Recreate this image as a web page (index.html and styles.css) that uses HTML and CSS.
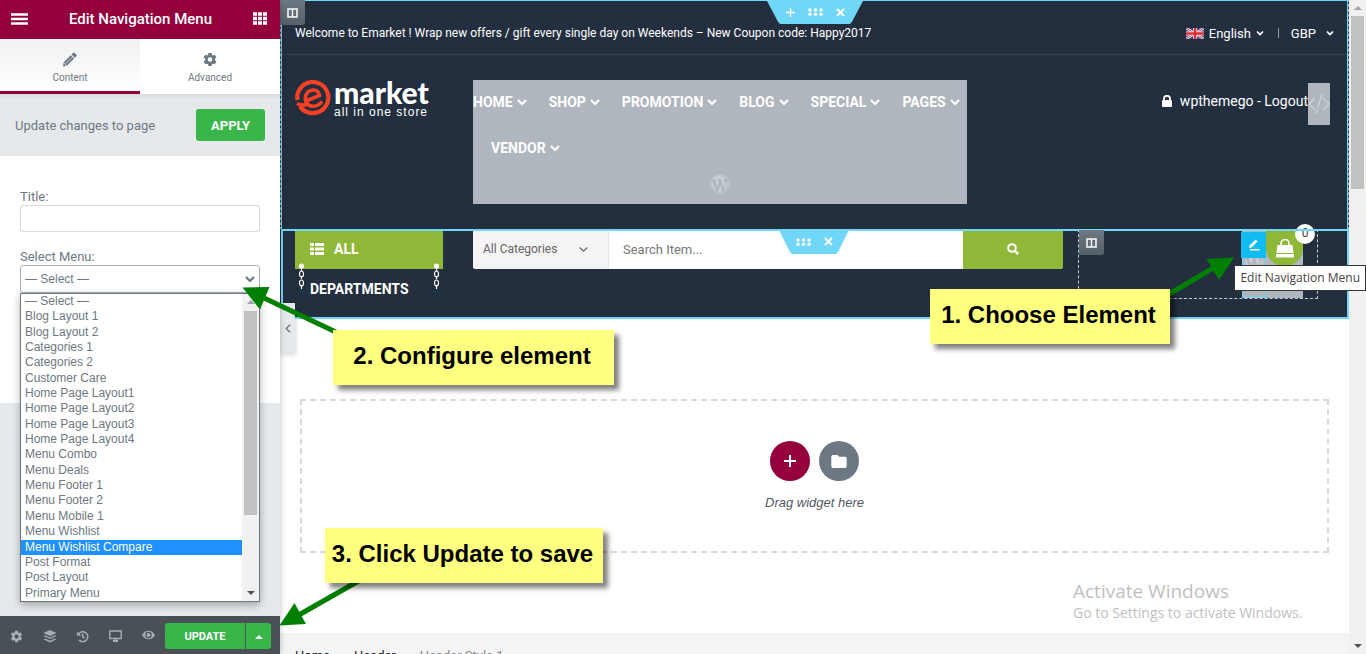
FILE: index.html
```html
<!DOCTYPE html>
<html lang="en">
<head>
  <meta charset="UTF-8" />
  <title>Edit Navigation Menu</title>
  <link rel="stylesheet" href="styles.css">
</head>
<body>
  <!-- shared icons -->
  <svg class="sprite" aria-hidden="true">
    <symbol id="chevron" viewBox="0 0 10 8"><path d="M1 2 L5 6 L9 2" fill="none" stroke="currentColor" stroke-width="2.2"/></symbol>
    <symbol id="gear" viewBox="0 0 16 16"><path fill="currentColor" fill-rule="evenodd" d="M6.3 1h3.4l.4 2 1 .6 2-.7 1.7 3-1.6 1.400v1.400l1.600 1.400-1.700 3-2-.7-1 .6-.4 2H6.300l-.4-2-1-.6-2 .7-1.700-3 1.600-1.400V7.300L1.200 5.900l1.700-3 2 .7 1-.6zM8 5.500a2.500 2.500 0 1 0 0 5 2.500 2.500 0 0 0 0-5z"/></symbol>
    <symbol id="dots" viewBox="0 0 15 8"><g fill="currentColor"><circle cx="2" cy="2" r="1.700"/><circle cx="7.500" cy="2" r="1.700"/><circle cx="13" cy="2" r="1.700"/><circle cx="2" cy="6.300" r="1.700"/><circle cx="7.500" cy="6.300" r="1.700"/><circle cx="13" cy="6.300" r="1.700"/></g></symbol>
    <symbol id="cross" viewBox="0 0 9 9"><path d="M1 1 L8 8 M8 1 L1 8" stroke="currentColor" stroke-width="2"/></symbol>
    <symbol id="columns" viewBox="0 0 11 10"><path d="M1 1h9v8H1z M5.500 1v8" fill="none" stroke="currentColor" stroke-width="1.500"/></symbol>
    <symbol id="wp" viewBox="0 0 20 20"><circle cx="10" cy="10" r="9.300" fill="none" stroke="currentColor"/><path fill="currentColor" d="M2.200 7 6.400 17.200A8 8 0 0 1 2.200 7zM3 5.500A8 8 0 0 1 15.500 4.200c-1.400.2-1.700 1.800-.9 3 .9 1.500.8 2.600.2 4.300l-1 3-3-9h1V5H7v.5h1l1 2.700-1.600 5-2.700-7.700h1V5H3.300zM10.200 11l2.400 6.500a8 8 0 0 1-4.600.2zM17.200 6.800a8 8 0 0 1-3.400 10l2.500-7c.4-1.200.7-2 .9-3z"/></symbol>
    <symbol id="chain" viewBox="0 0 7 32"><g fill="none" stroke="#fff" stroke-width="1.200"><path d="M3.500 4v4M3.500 13v3M3.500 22v4"/><ellipse cx="3.500" cy="11" rx="2" ry="3"/><ellipse cx="3.500" cy="20" rx="2" ry="3"/></g><circle cx="3.500" cy="3" r="2.600" fill="#fff"/><circle cx="3.500" cy="29" r="2.600" fill="#17384e"/></symbol>
  </svg>

  <div class="editor">
    <aside class="panel">
      <header class="panel-header">
        <button class="icon-btn" aria-label="Menu"><svg width="17" height="12" viewBox="0 0 17 12"><path d="M0 1.500h17M0 6h17M0 10.500h17" stroke="currentColor" stroke-width="2.400"/></svg></button>
        <h1>Edit Navigation Menu</h1>
        <button class="icon-btn" aria-label="Widgets"><svg width="14" height="13" viewBox="0 0 14 13"><path d="M0 2h14M0 6.500h14M0 11h14" stroke="currentColor" stroke-width="3.600" stroke-dasharray="4 1"/></svg></button>
      </header>
      <nav class="tabs">
        <button class="tab active">
          <svg width="14" height="15" viewBox="0 0 14 15"><path fill="currentColor" d="M0 14.500l.8-4.300 6.900-7 3.400 3.400-7 7zM8.500 2.400 10 .9q.8-.7 1.600 0l1.700 1.700q.8.8 0 1.600l-1.500 1.600z"/><path d="M3 11.500l5.800-6M1 11l2.500 2.500" stroke="#fff" stroke-width=".7"/></svg>
          Content
        </button>
        <button class="tab">
          <svg width="16" height="15"><use href="#gear"/></svg>
          Advanced
        </button>
      </nav>
      <div class="notice">
        <span>Update changes to page</span>
        <button class="apply">APPLY</button>
      </div>
      <div class="controls">
        <div class="control">
          <label for="title">Title:</label>
          <input id="title" type="text">
        </div>
        <div class="control">
          <label for="menu">Select Menu:</label>
          <div class="select-wrap">
            <select id="menu"><option>— Select —</option></select>
            <svg class="select-arrow" width="10" height="8"><use href="#chevron"/></svg>
            <div class="dropdown">
              <ul role="listbox" aria-label="Select Menu">
                <li>— Select —</li>
                <li>Blog Layout 1</li>
                <li>Blog Layout 2</li>
                <li>Categories 1</li>
                <li>Categories 2</li>
                <li>Customer Care</li>
                <li>Home Page Layout1</li>
                <li>Home Page Layout2</li>
                <li>Home Page Layout3</li>
                <li>Home Page Layout4</li>
                <li>Menu Combo</li>
                <li>Menu Deals</li>
                <li>Menu Footer 1</li>
                <li>Menu Footer 2</li>
                <li>Menu Mobile 1</li>
                <li>Menu Wishlist</li>
                <li class="selected">Menu Wishlist Compare</li>
                <li>Post Format</li>
                <li>Post Layout</li>
                <li>Primary Menu</li>
              </ul>
              <div class="scrollbar">
                <i class="up"></i><span class="thumb"></span><i class="down"></i>
              </div>
            </div>
          </div>
        </div>
      </div>
      <footer class="panel-footer">
        <div class="tools">
          <button class="icon-btn" aria-label="Settings"><svg width="13" height="13"><use href="#gear"/></svg></button>
          <button class="icon-btn" aria-label="Navigator"><svg width="14" height="13" viewBox="0 0 14 13"><path fill="currentColor" d="M7 0l6.500 3L7 6 .5 3zM2 5.200l5 2.300 5-2.300 1.500.8L7 9 .5 6zM2 8.500l5 2.300 5-2.300 1.500.8L7 12.400.5 9.300z"/></svg></button>
          <button class="icon-btn" aria-label="History"><svg width="13" height="13" viewBox="0 0 13 13"><path d="M2.300 4.500A5 5 0 1 1 3 10M6.600 3.500v3.300l2 1.300" fill="none" stroke="currentColor" stroke-width="1.500"/><path fill="currentColor" d="M.8 1.500v4.300h4.200z"/></svg></button>
          <button class="icon-btn" aria-label="Responsive mode"><svg width="13" height="12" viewBox="0 0 13 12"><path d="M.8 1h11.400v7.500H.8z" fill="none" stroke="currentColor" stroke-width="1.400"/><path d="M4 11h5M6.500 9v2" stroke="currentColor" stroke-width="1.800"/></svg></button>
          <button class="icon-btn" aria-label="Preview"><svg width="13" height="10" viewBox="0 0 13 10"><path fill="currentColor" fill-rule="evenodd" d="M0 5Q2.500.7 6.500.7T13 5q-2.500 4.300-6.500 4.300T0 5zm6.500-3.200a3.200 3.200 0 1 0 0 6.400 3.200 3.200 0 0 0 0-6.400z"/><circle cx="6.500" cy="5" r="2" fill="currentColor"/></svg></button>
        </div>
        <button class="update">UPDATE</button>
        <button class="update-more" aria-label="Save options"><i class="up"></i></button>
      </footer>
    </aside>

    <main class="preview">
      <section class="section section-top">
        <div class="topbar">
          <p>Welcome to Emarket ! Wrap new offers / gift every single day on Weekends – New Coupon code: Happy2017</p>
          <div class="locale">
            <a href="#" class="language">
              <svg width="18" height="11" viewBox="0 0 18 11"><path fill="#2b3f8c" d="M0 0h18v11H0z"/><path d="M0 0l18 11M18 0L0 11" stroke="#eee" stroke-width="2.600"/><path d="M0 0l18 11M18 0L0 11" stroke="#d33" stroke-width="1"/><path d="M9 0v11M0 5.500h18" stroke="#eee" stroke-width="4"/><path d="M9 0v11M0 5.500h18" stroke="#e02b35" stroke-width="2.600"/></svg>
              English
              <svg width="8" height="6"><use href="#chevron"/></svg>
            </a>
            <span class="sep"></span>
            <a href="#" class="currency">GBP <svg width="8" height="6"><use href="#chevron"/></svg></a>
          </div>
        </div>
        <div class="header-row">
          <a href="#" class="logo">
            <svg width="36" height="36" viewBox="0 0 36 36"><g fill="none" stroke="#fb4023"><path d="M2.500 20A15.500 15.500 0 1 1 4.800 26" stroke-width="4.200"/><path d="M2 23.500Q7 26 12 24.500" stroke-width="3.600"/><path d="M10 21.500L24.500 15.500Q23.500 9.800 18 10Q10.300 10.800 10.300 19Q11 26.300 18.500 26.300Q23.500 26 27 21.500" stroke-width="3.600"/></g></svg>
            <span class="logo-text"><strong>market</strong><small>all in one store</small></span>
          </a>
          <div class="nav-widget">
            <nav class="main-nav">
              <a href="#">HOME <svg width="10" height="8"><use href="#chevron"/></svg></a>
              <a href="#">SHOP <svg width="10" height="8"><use href="#chevron"/></svg></a>
              <a href="#">PROMOTION <svg width="10" height="8"><use href="#chevron"/></svg></a>
              <a href="#">BLOG <svg width="10" height="8"><use href="#chevron"/></svg></a>
              <a href="#">SPECIAL <svg width="10" height="8"><use href="#chevron"/></svg></a>
              <a href="#">PAGES <svg width="10" height="8"><use href="#chevron"/></svg></a>
              <a href="#">VENDOR <svg width="10" height="8"><use href="#chevron"/></svg></a>
            </nav>
            <svg class="wp-icon" width="20" height="20"><use href="#wp"/></svg>
          </div>
          <div class="account">
            <a href="#" class="logout">
              <svg width="10" height="12" viewBox="0 0 10 12"><rect y="5" width="10" height="7" rx="1" fill="#fff"/><path d="M2 6V3.800a3 3 0 0 1 6 0V6" fill="none" stroke="#fff" stroke-width="1.800"/></svg>
              wpthemego - Logout
            </a>
            <span class="code-widget"><svg width="22" height="22" viewBox="0 0 22 22"><path d="M7 5L1 11l6 6M15 5l6 6-6 6M14 1L8 21" fill="none" stroke="currentColor" stroke-width="1.200"/></svg></span>
          </div>
        </div>
        <div class="section-handle wide">
          <svg width="9" height="9" viewBox="0 0 9 9"><path d="M4.500 0v9M0 4.500h9" stroke="currentColor" stroke-width="1.400"/></svg>
          <svg width="15" height="8"><use href="#dots"/></svg>
          <svg width="9" height="9"><use href="#cross"/></svg>
        </div>
        <span class="column-handle"><svg width="11" height="10"><use href="#columns"/></svg></span>
      </section>

      <section class="section section-search">
        <div class="search-row">
          <div class="departments">
            <svg class="chain left" width="7" height="32"><use href="#chain"/></svg>
            <svg class="chain right" width="7" height="32"><use href="#chain"/></svg>
            <h2><svg width="14" height="12" viewBox="0 0 14 12"><path d="M0 1.500h4M5 1.500h9M0 6h4M5 6h9M0 10.500h4M5 10.500h9" stroke="currentColor" stroke-width="3.200"/></svg>ALL DEPARTMENTS</h2>
          </div>
          <form class="search">
            <div class="category">
              <select aria-label="Category"><option>All Categories</option></select>
              <svg width="9" height="7" viewBox="0 0 9 7"><path d="M.8 1.500l3.700 3.700 3.700-3.700" fill="none" stroke="currentColor" stroke-width="1.300"/></svg>
            </div>
            <input type="text" placeholder="Search Item..." aria-label="Search">
            <button type="button" aria-label="Search"><svg width="12" height="12" viewBox="0 0 12 12"><circle cx="5" cy="5" r="3.800" fill="none" stroke="#fff" stroke-width="2"/><path d="M7.800 7.800l3.400 3.400" stroke="#fff" stroke-width="2.400"/></svg></button>
          </form>
          <div class="cart-column">
            <div class="menu-widget">
              <svg width="20" height="20"><use href="#wp"/></svg>
              <button class="edit-handle" aria-label="Edit Navigation Menu"><svg width="12" height="12" viewBox="0 0 12 12"><path fill="#fff" d="M1 9l.7-2.800L7.600.4l2 2L3.800 8.300zM2 10h9.500v1.500H2z"/></svg></button>
            </div>
            <div class="cart-widget">
              <a href="#" class="cart" aria-label="Cart"><svg width="20" height="19" viewBox="0 0 20 19"><path fill="#fff" d="M2.500 6h15l1 8h-17zM1 15h18v3.500H1z"/><path d="M6 9V4.500a4 4 0 0 1 8 0V9" fill="none" stroke="#fff" stroke-width="1.600"/></svg></a>
              <span class="badge">0</span>
            </div>
            <span class="column-handle"><svg width="11" height="10"><use href="#columns"/></svg></span>
          </div>
        </div>
        <div class="section-handle">
          <svg width="15" height="8"><use href="#dots"/></svg>
          <svg width="9" height="9"><use href="#cross"/></svg>
        </div>
      </section>

      <div class="drop-area">
        <div class="drop-buttons">
          <button class="add" aria-label="Add section"><svg width="12" height="12" viewBox="0 0 12 12"><path d="M6 0v12M0 6h12" stroke="#fff" stroke-width="2"/></svg></button>
          <button class="library" aria-label="Add template"><svg width="16" height="13" viewBox="0 0 16 13"><path fill="#fff" d="M2 0h4.500L8 1.800h6q1.700 0 1.700 1.500v8q0 1.700-1.700 1.700H2Q.3 13 .3 11.300V1.700Q.3 0 2 0z"/></svg></button>
        </div>
        <p>Drag widget here</p>
      </div>

      <nav class="breadcrumb">
        <a href="#">Home</a><i>›</i><a href="#">Header</a><i>›</i><span>Header Style 1</span>
      </nav>

      <button class="collapse" aria-label="Hide panel"><svg width="6" height="9" viewBox="0 0 6 9"><path d="M5 .8L1.300 4.500 5 8.200" fill="none" stroke="currentColor" stroke-width="1.400"/></svg></button>
      <div class="watermark">
        <strong>Activate Windows</strong>
        <span>Go to Settings to activate Windows.</span>
      </div>
    </main>

    <div class="scrollbar page-scroll">
      <i class="up"></i><span class="thumb"></span><i class="down"></i>
    </div>
  </div>

  <!-- tutorial notes -->
  <svg class="arrows" width="1366" height="654" viewBox="0 0 1366 654">
    <g stroke="#008000" stroke-width="5">
      <path d="M1164 297L1215 267"/>
      <path d="M340 334L262 297"/>
      <path d="M362 579L297 616"/>
    </g>
    <g fill="#008000">
      <path d="M1234 257.500L1206.500 259 1219 280z"/>
      <path d="M242.500 287.500L269.500 287 260 309.500z"/>
      <path d="M279.500 625.500L294.500 603 306 624z"/>
    </g>
  </svg>
  <div class="tooltip">Edit Navigation Menu</div>
  <div class="note note-1">1. Choose Element</div>
  <div class="note note-2">2. Configure element</div>
  <div class="note note-3">3. Click Update to save</div>
</body>
</html>
```

FILE: styles.css
```css
* { box-sizing: border-box; }

body {
  margin: 0;
  overflow: hidden;
  background-color: #fff;
  font-family: Roboto, sans-serif;
  font-size: 13px;
}

svg { display: block; flex: none; }
a { color: inherit; text-decoration: none; }
h1, h2, p, ul { margin: 0; padding: 0; }
ul { list-style: none; }

button {
  padding: 0;
  border: 0;
  background: none;
  color: inherit;
  font-family: inherit;
  cursor: pointer;
}

.sprite { position: absolute; width: 0; height: 0; }

.editor {
  display: flex;
  height: 100vh;
}

/* left panel */
.panel {
  display: flex;
  flex-direction: column;
  flex: none;
  width: 280px;
  background-color: #e6e9ec;
  color: #6d7882;
  position: relative;
  z-index: 2;
  box-shadow: 0 0 6px rgba(0,0,0,0.25);
}

.panel-header {
  display: flex;
  align-items: center;
  justify-content: space-between;
  height: 39px;
  padding: 0 13px 2px 11px;
  background-color: #93003c;
  color: #fff;
}

.panel-header h1 {
  font-size: 15px;
  font-weight: 500;
}

.tabs {
  display: flex;
  height: 55px;
  background-color: #fff;
  box-shadow: 0 1px 5px rgba(0,0,0,0.1);
}

.tab {
  flex: 1;
  display: flex;
  flex-direction: column;
  align-items: center;
  gap: 5px;
  padding-top: 13px;
  font-size: 10px;
  line-height: 12px;
  border-bottom: 3px solid transparent;
}

.tab.active {
  border-bottom-color: #93003c;
  background-image: linear-gradient(#f1f2f4, #fff);
}

.notice {
  display: flex;
  align-items: center;
  justify-content: space-between;
  height: 62px;
  padding: 0 15px;
}

.apply {
  width: 69px;
  height: 32px;
  border-radius: 3px;
  background-color: #39b54a;
  color: #fff;
  font-size: 13px;
  font-weight: 700;
}

.controls {
  height: 247px;
  padding: 33px 20px 0;
  background-color: #fff;
}

.control { margin-bottom: 17px; }

.control label {
  display: block;
  line-height: 16px;
}

.control input,
.control select {
  display: block;
  width: 100%;
  height: 28px;
  border: 1px solid #d5dadf;
  border-radius: 3px;
  background-color: #fff;
  color: #6d7882;
  font-family: "Liberation Sans", sans-serif;
  font-size: 12px;
}

.control input { height: 27px; }

.control select {
  padding: 0 4px;
  border-color: #a4afb7;
  appearance: none;
}

.select-wrap { position: relative; }

.select-arrow {
  position: absolute;
  top: 10px;
  right: 5px;
}

.dropdown {
  position: absolute;
  top: 28px;
  left: 0;
  display: flex;
  width: 100%;
  height: 309px;
  border: 1px solid #6d7882;
  background-color: #fff;
  box-shadow: 0 3px 8px rgba(0,0,0,0.3);
}

.dropdown ul {
  flex: 1;
  display: flex;
  flex-direction: column;
  font-family: "Liberation Sans", sans-serif;
  font-size: 12px;
}

.dropdown li {
  flex: 1;
  padding-left: 4px;
  line-height: 15px;
}

.dropdown .selected {
  background-color: #1e90ff;
  color: #fff;
}

.scrollbar {
  flex: none;
  display: flex;
  flex-direction: column;
  align-items: center;
  width: 17px;
  padding: 6px 0;
  background-color: #f1f1f1;
}

.scrollbar .thumb {
  width: 13px;
  height: 204px;
  margin-top: 7px;
  background-color: #c1c1c1;
}

.up, .down {
  border: 4px solid transparent;
  border-top-width: 0;
  border-bottom-color: #a3a3a3;
}

.down {
  margin-top: auto;
  border-top: 4px solid #505050;
  border-bottom-width: 0;
}

.panel-footer {
  display: flex;
  align-items: center;
  height: 38px;
  margin-top: auto;
  padding: 2px 9px 0 0;
  background-color: #495157;
  color: #a4afb7;
}

.tools {
  flex: 1;
  display: flex;
}

.tools .icon-btn {
  flex: 1;
  display: flex;
  justify-content: center;
}

.update {
  width: 80px;
  height: 26px;
  border-radius: 3px 0 0 3px;
  background-color: #39b54a;
  color: #fff;
  font-size: 11px;
  font-weight: 700;
}

.update-more {
  width: 25px;
  height: 26px;
  margin-left: 1px;
  border-radius: 0 3px 3px 0;
  background-color: #39b54a;
}

.update-more .up {
  display: inline-block;
  vertical-align: middle;
  border-bottom-color: #fff;
}

/* page preview */
.preview {
  position: relative;
  flex: 1;
  min-width: 0;
}

.section {
  position: relative;
  background-color: #232f3f;
  color: #fff;
}

.section::after {
  content: "";
  position: absolute;
  inset: 0 0 0 1px;
  border: 2px solid #71d7f7;
  pointer-events: none;
}

.section-top::after {
  border-width: 1px 1px 0;
  outline: 1px dashed #9aa5ae;
  outline-offset: 0;
  right: 1px;
}

.topbar {
  display: flex;
  align-items: center;
  justify-content: space-between;
  height: 55px;
  padding: 12px 15px 0;
  border-bottom: 1px solid #364150;
}

.topbar p { font-size: 12px; }

.locale,
.locale a {
  display: flex;
  align-items: center;
}

.language { gap: 5px; }
.currency { gap: 10px; }

.sep {
  width: 1px;
  height: 10px;
  margin: 0 12px 0 14px;
  background-color: #9299a2;
}

.header-row {
  display: grid;
  grid-template-columns: 178fr 524fr 367fr;
  align-items: start;
  padding: 25px 0;
}

.logo {
  display: flex;
  gap: 3px;
  padding-left: 15px;
}

.logo-text {
  display: flex;
  flex-direction: column;
}

.logo-text strong {
  font-family: Lato, sans-serif;
  font-size: 30px;
  font-weight: 900;
  line-height: 25px;
}

.logo-text small {
  font-family: "Liberation Sans", sans-serif;
  font-size: 12px;
  line-height: 14px;
  letter-spacing: 1px;
}

.nav-widget {
  height: 124px;
  margin: 0 15px;
  background-color: #b0b6be;
}

.main-nav {
  display: flex;
  flex-wrap: wrap;
}

.main-nav a {
  display: flex;
  align-items: center;
  gap: 4px;
  height: 46px;
  padding: 0 4px 2px 18px;
  font-size: 14px;
  font-weight: 700;
}

.main-nav a:first-child { padding-left: 0; }

.wp-icon {
  margin: 2px auto 0;
  color: #c5cdd6;
}

.account {
  display: flex;
  justify-content: flex-end;
  margin-top: 3px;
  padding-right: 19px;
  font-size: 14px;
}

.logout {
  display: flex;
  align-items: center;
  gap: 8px;
  height: 36px;
}

.code-widget {
  display: flex;
  align-items: center;
  height: 42px;
  background-color: #b0b6be;
  color: #cdd4db;
}

.section-handle {
  position: absolute;
  top: 0;
  left: 50%;
  z-index: 1;
  display: flex;
  align-items: center;
  justify-content: center;
  gap: 13px;
  width: 71px;
  height: 25px;
  margin-left: -36px;
  background-color: #71d7f7;
  clip-path: polygon(0 0, 100% 0, 84% 92%, 81% 100%, 19% 100%, 16% 92%);
}

.section-handle.wide {
  width: 97px;
  height: 24px;
  margin-left: -48px;
  clip-path: polygon(0 0, 100% 0, 88% 92%, 86% 100%, 14% 100%, 12% 92%);
}

.column-handle {
  position: absolute;
  top: 0;
  left: 0;
  z-index: 1;
  display: flex;
  align-items: center;
  justify-content: center;
  width: 25px;
  height: 25px;
  border-radius: 0 0 3px 0;
  background-image: linear-gradient(#6d7882, #556068);
}

.search-row {
  display: grid;
  grid-template-columns: 178fr 620fr 271fr;
  padding-bottom: 20px;
}

.departments {
  position: relative;
  height: 40px;
  margin: 0 15px;
  padding: 0 15px;
  background-color: #8fb838;
}

.departments h2 {
  width: 100px;
  font-size: 14px;
  font-weight: 700;
  line-height: 40px;
}

.departments h2 svg {
  display: inline-block;
  vertical-align: -1px;
  margin-right: 10px;
}

.chain {
  position: absolute;
  top: 34px;
}

.chain.left { left: 3px; }
.chain.right { right: 3px; }

.search {
  display: flex;
  height: 40px;
  margin: 0 15px;
  border-radius: 3px;
  overflow: hidden;
  background-color: #fff;
  color: #666;
}

.category {
  display: flex;
  align-items: center;
  width: 136px;
  padding: 0 20px 0 10px;
  border-right: 1px solid #e8e8e8;
  background-color: #f4f4f4;
}

.category select {
  flex: 1;
  min-width: 0;
  border: 0;
  background: none;
  color: #666;
  font-family: inherit;
  font-size: 12px;
  appearance: none;
}

.search input {
  flex: 1;
  min-width: 0;
  padding: 0 14px;
  border: 0;
  font-family: inherit;
  font-size: 13px;
}

.search input::placeholder { color: #777; }

.search button {
  display: flex;
  align-items: center;
  justify-content: center;
  width: 100px;
  background-color: #8fb838;
}

.cart-column {
  position: relative;
  display: flex;
  justify-content: flex-end;
  height: 70px;
  margin-right: 31px;
  padding-right: 14px;
  border: 1px dashed #c8ccd1;
}

.menu-widget {
  position: relative;
  width: 24px;
  padding: 21px 1px;
  border: 1px solid #71d7f7;
  background-color: #b0b6be;
  color: #c5cdd6;
}

.edit-handle {
  position: absolute;
  top: 1px;
  left: -2px;
  display: flex;
  align-items: center;
  justify-content: center;
  width: 25px;
  height: 26px;
  background-color: #10bcf2;
}

.cart-widget {
  position: relative;
  width: 37px;
  background-color: #b0b6be;
}

.cart {
  display: flex;
  align-items: center;
  justify-content: center;
  height: 36px;
  border-radius: 0 0 18px 18px;
  background-color: #8fb838;
}

.badge {
  position: absolute;
  top: -6px;
  right: -12px;
  width: 20px;
  height: 20px;
  border-radius: 50%;
  background-color: #fff;
  color: #444;
  font-size: 12px;
  line-height: 18px;
  text-align: center;
}

.drop-area {
  margin: 80px 20px;
  padding: 40px 0;
  border: 2px dashed #d5dadf;
  text-align: center;
}

.drop-buttons {
  display: flex;
  justify-content: center;
  gap: 9px;
}

.drop-buttons button {
  display: flex;
  align-items: center;
  justify-content: center;
  width: 40px;
  height: 40px;
  border-radius: 50%;
  background-color: #6d7882;
}

.drop-buttons .add { background-color: #93003c; }

.drop-area p {
  margin-top: 14px;
  color: #54595f;
  font-family: "Liberation Sans", sans-serif;
  font-style: italic;
  line-height: 16px;
}

.breadcrumb {
  display: flex;
  gap: 10px;
  padding: 15px;
  background-color: #f4f4f4;
  color: #888;
  line-height: 16px;
}

.breadcrumb a { color: #222; }
.breadcrumb i { font-style: normal; }

.collapse {
  position: absolute;
  top: 303px;
  left: 0;
  z-index: 1;
  display: flex;
  align-items: center;
  width: 15px;
  height: 50px;
  padding-left: 5px;
  background-color: #e6e9ec;
  color: #6d7882;
  box-shadow: 1px 2px 4px rgba(0,0,0,0.15);
}

.watermark {
  position: absolute;
  right: 40px;
  bottom: 31px;
  display: flex;
  flex-direction: column;
  min-width: 236px;
  color: #bfbfbf;
  font-family: "Open Sans", sans-serif;
  font-size: 14px;
  line-height: 20px;
}

.watermark strong {
  font-size: 19px;
  font-weight: 400;
  line-height: 24px;
}

.page-scroll .thumb { height: 173px; margin-top: 6px; }

/* notes over the editor */
.arrows {
  position: absolute;
  top: 0;
  left: 0;
  z-index: 3;
  pointer-events: none;
}

.tooltip {
  position: absolute;
  top: 265px;
  right: 0;
  z-index: 3;
  padding: 3px 5px;
  border: 1px solid #333;
  background-color: #fff;
  color: #444;
  font-family: "Open Sans", sans-serif;
  font-size: 12px;
  line-height: 18px;
}

.note {
  position: absolute;
  z-index: 4;
  height: 55px;
  padding-right: 3px;
  background-color: #ffff80;
  color: #000;
  font-family: "Liberation Sans", sans-serif;
  font-size: 24px;
  font-weight: 700;
  line-height: 52px;
  text-align: center;
  white-space: nowrap;
  box-shadow: 5px 5px 5px rgba(0,0,0,0.5);
}

.note-1 { top: 289px; left: 930px; width: 240px; }
.note-2 { top: 330px; left: 333px; width: 281px; }
.note-3 { top: 528px; left: 325px; width: 278px; }
```
